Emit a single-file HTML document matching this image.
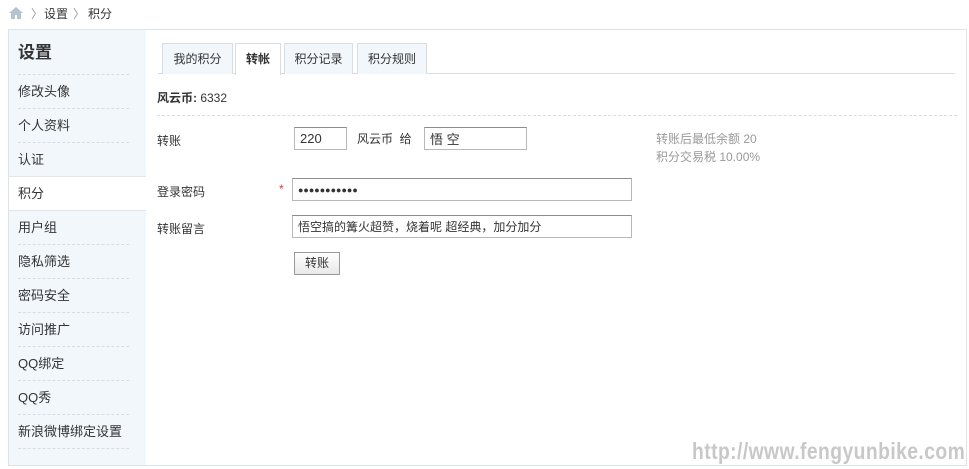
<!DOCTYPE html><html><head><meta charset="utf-8"><style>
*{margin:0;padding:0;box-sizing:border-box}
body{width:969px;height:469px;background:#fff;font-family:"Liberation Sans","Noto Sans CJK SC",sans-serif;font-size:12px;color:#333;position:relative;overflow:hidden}
.a{position:absolute;white-space:nowrap}
#box{position:absolute;left:8px;top:29px;width:959px;height:437px;border:1px solid #dce3ea}
#side{position:absolute;left:9px;top:30px;width:137px;height:435px;background:#f2f7fb}
.it{position:absolute;left:18px;width:111px;height:34px;line-height:34px;font-size:13px;color:#333;border-bottom:1px dashed #d6dde4}
.tab{position:absolute;top:43px;height:31px;line-height:31px;text-align:center;border:1px solid #d6dde4;border-bottom:none;background:#f2f7fb;font-size:12px}
input{position:absolute;border:1px solid #b8b8b8;border-top-color:#8d8d8d;height:23px;font:13px "Liberation Sans","Noto Sans CJK SC",sans-serif;padding-left:5px;color:#333;background:#fff}
</style></head><body>
<svg class="a" style="left:9px;top:7px" width="14" height="12" viewBox="0 0 14 12"><path d="M7 0L0 6h2v6h4V8h2v4h4V6h2z" fill="#b5c3d0"/></svg>
<div class="a" style="left:31px;top:5px;color:#999">〉</div>
<div class="a" style="left:44px;top:5px">设置</div>
<div class="a" style="left:73px;top:5px;color:#999">〉</div>
<div class="a" style="left:88px;top:5px">积分</div>
<div id="box"></div>
<div id="side"></div>
<div class="it" style="top:37px;height:38px;line-height:32px;font-size:17px;font-weight:bold">设置</div>
<div class="it" style="top:75px">修改头像</div>
<div class="it" style="top:109px">个人资料</div>
<div class="it" style="top:143px;border-bottom:none">认证</div>
<div class="a" style="left:9px;top:176px;width:137px;height:35px;background:#fff;border-top:1px solid #e0e5ea;border-bottom:1px solid #e0e5ea"></div>
<div class="it" style="top:177px;border-bottom:none">积分</div>
<div class="it" style="top:211px">用户组</div>
<div class="it" style="top:245px">隐私筛选</div>
<div class="it" style="top:279px">密码安全</div>
<div class="it" style="top:313px">访问推广</div>
<div class="it" style="top:347px">QQ绑定</div>
<div class="it" style="top:381px">QQ秀</div>
<div class="it" style="top:415px">新浪微博绑定设置</div>
<div class="a" style="left:158px;top:73px;width:797px;border-top:1px solid #d6dde4"></div>
<div class="tab" style="left:162px;width:71px">我的积分</div>
<div class="tab" style="left:235px;width:46px;background:#fff;height:32px;font-weight:bold">转帐</div>
<div class="tab" style="left:284px;width:69px">积分记录</div>
<div class="tab" style="left:357px;width:70px">积分规则</div>
<div class="a" style="left:157px;top:89px"><b>风云币:</b> 6332</div>
<div class="a" style="left:157px;top:115px;width:800px;border-top:1px dashed #d6dde4"></div>
<div class="a" style="left:157px;top:132px">转账</div>
<input style="left:294px;top:127px;width:53px" value="220">
<div class="a" style="left:357px;top:130px">风云币 &nbsp;给</div>
<input style="left:424px;top:127px;width:103px" value="悟 空">
<div class="a" style="left:656px;top:130px;color:#999;line-height:18px">转账后最低余额 20<br>积分交易税 10.00%</div>
<div class="a" style="left:157px;top:183px">登录密码</div>
<div class="a" style="left:279px;top:182px;color:#e33">*</div>
<input style="left:292px;top:178px;width:340px;font-size:9px" value="●●●●●●●●●●●">
<div class="a" style="left:157px;top:220px">转账留言</div>
<input style="left:292px;top:215px;width:340px;font-size:12px" value="悟空搞的篝火超赞，烧着呢 超经典，加分加分">
<div class="a" style="left:294px;top:252px;width:46px;height:23px;border:1px solid #999;background:linear-gradient(#fff,#e8e8e8);text-align:center;line-height:21px">转账</div>
<div class="a" style="right:4px;top:438px;font:bold 23px 'Liberation Sans',sans-serif;color:#c8c8c8;letter-spacing:0.5px;transform:scaleX(0.84);transform-origin:right">http://www.fengyunbike.com</div>
</body></html>
